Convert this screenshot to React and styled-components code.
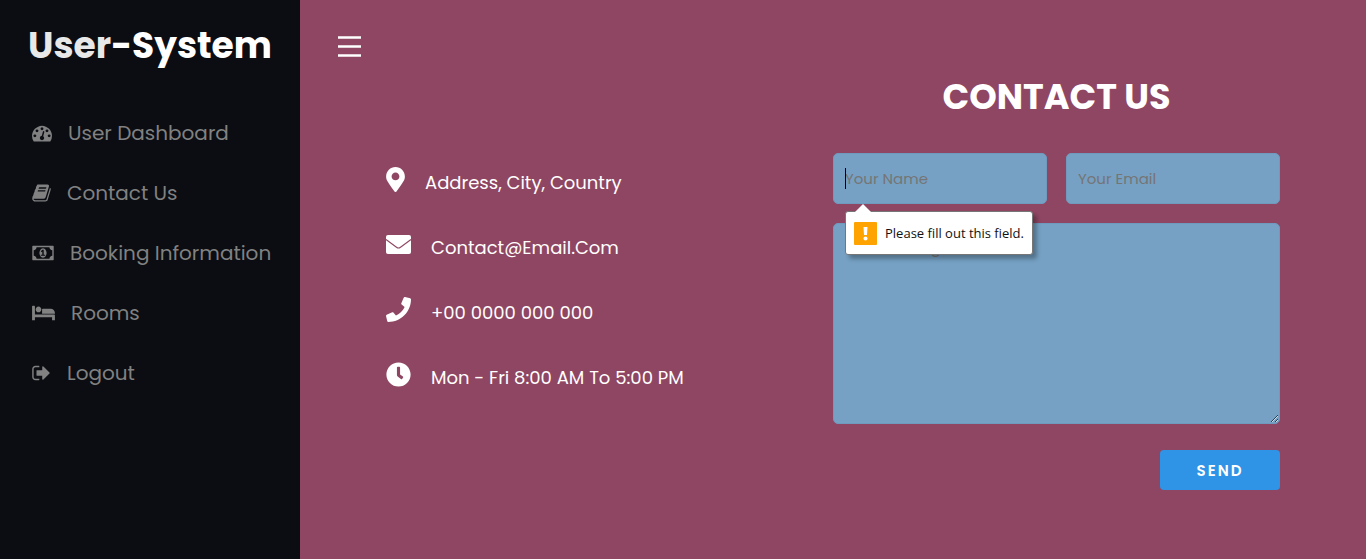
import React from "react";
import styled, { createGlobalStyle } from "styled-components";
import { FaMapMarkerAlt, FaPhone, FaClock } from "react-icons/fa";

const GlobalStyle = createGlobalStyle`
  *, *::before, *::after { box-sizing: border-box; }
  body {
    margin: 0;
    font-family: Poppins, Inter, "Liberation Sans", sans-serif;
    background: #8f4662;
  }
  h1, h2, p, ul { margin: 0; padding: 0; }
  button, input, textarea { font-family: inherit; }
`;

const Page = styled.div`
  display: flex;
  min-height: 100vh;
`;

const Sidebar = styled.aside`
  flex: 0 0 300px;
  padding-top: 17px;
  background: #0b0d12;
`;

const Brand = styled.h1`
  color: #fff;
  font-size: 36px;
  line-height: 58px;
  font-weight: 700;
  text-align: center;
  white-space: nowrap;
`;

const BrandSoft = styled.span`
  color: #e8e8e8;
`;

const NavList = styled.ul`
  display: flex;
  flex-direction: column;
  gap: 20px;
  margin-top: 38px;
  list-style: none;
`;

const NavLink = styled.a`
  display: flex;
  align-items: center;
  gap: 16px;
  height: 40px;
  padding-left: 32px;
  color: #818181;
  font-size: 20px;
  line-height: 40px;
  white-space: nowrap;
  text-decoration: none;
`;

const Glyph = styled.svg`
  flex: none;
  height: 20px;
  fill: currentColor;
`;

const Main = styled.main`
  flex: 1;
  min-width: 0;
  padding: 24px 86px;
`;

const MenuButton = styled.button`
  display: block;
  width: 47px;
  height: 46px;
  margin-left: -60px;
  padding: 4px 0 0;
  border: 0;
  background: none;
  color: #fff;
  cursor: pointer;
`;

const Contact = styled.section`
  display: grid;
  grid-template-columns: 1fr 1fr;
`;

const InfoList = styled.ul`
  display: flex;
  flex-direction: column;
  gap: 25px;
  padding-top: 92px;
  list-style: none;
`;

const InfoItem = styled.li`
  display: flex;
  gap: 20px;
  height: 40px;
  padding-top: 5px;
  color: #fff;
  font-size: 18px;
  line-height: 31px;
  white-space: nowrap;

  svg {
    flex: none;
    width: ${(p) => p.$iconWidth}px;
    height: 25px;
  }
`;

const Form = styled.form`
  display: flex;
  flex-direction: column;
`;

const Title = styled.h2`
  color: #fff;
  font-size: 35px;
  line-height: 54px;
  font-weight: 700;
  text-align: center;
  text-transform: uppercase;
`;

const Fields = styled.div`
  display: grid;
  grid-template-columns: 1fr 1fr;
  gap: 19px;
  margin-top: 29px;
`;

const Field = styled.div`
  position: relative;
  display: flex;
  grid-column: ${(p) => (p.$wide ? "1 / -1" : "auto")};
`;

const fieldLook = `
  width: 100%;
  padding: 11px;
  border: 1px solid #6f9abd;
  border-radius: 5px;
  background: #76a1c4;
  color: #222;
  font-size: 15px;
  line-height: 25px;
  outline: none;
  &::placeholder { color: #757575; opacity: 1; }
`;

const TextInput = styled.input`
  ${fieldLook}
  height: 51px;
`;

const TextArea = styled.textarea`
  ${fieldLook}
  display: block;
  height: 201px;
  resize: vertical;
`;

const Caret = styled.span`
  position: absolute;
  left: 12px;
  top: 15px;
  width: 1px;
  height: 21px;
  background: #000;
`;

const Hint = styled.div`
  position: absolute;
  z-index: 1;
  left: 12px;
  top: 58px;
  display: flex;
  align-items: center;
  gap: 8px;
  height: 44px;
  padding: 0 8px;
  border: 1px solid #767676;
  border-radius: 3px;
  background: #fff;
  box-shadow: 4px 4px 4px rgba(0, 0, 0, 0.3);
  color: #111;
  font-family: "Open Sans", "Noto Sans", sans-serif;
  font-size: 13px;
  white-space: nowrap;

  &::before {
    content: "";
    position: absolute;
    left: 9px;
    top: -8px;
    border: 8px solid transparent;
    border-top: 0;
    border-bottom-color: #fff;
  }
`;

const SendButton = styled.button`
  align-self: flex-end;
  width: 120px;
  height: 40px;
  margin-top: 26px;
  border: 0;
  border-radius: 4px;
  background: #2f94e6;
  color: #fff;
  font-size: 15px;
  font-weight: 600;
  letter-spacing: 2px;
  text-transform: uppercase;
  cursor: pointer;
`;

const nav = [
  {
    label: "User Dashboard",
    box: "0 0 1792 1792",
    width: 20,
    d: "M384 1152q0-53-37.5-90.500t-90.500-37.500-90.500 37.500-37.500 90.500 37.500 90.500 90.500 37.500 90.500-37.500 37.500-90.500zm192-448q0-53-37.500-90.500t-90.500-37.500-90.500 37.500-37.500 90.500 37.500 90.500 90.500 37.500 90.500-37.500 37.500-90.500zm428 481l101-382q6-26-7.500-48.500t-38.500-29.500-48 6.500-30 39.500l-101 382q-60 5-107 43.500t-63 98.500q-20 77 20 146t117 89 146-20 89-117q16-60-6-117t-72-91zm660-33q0-53-37.500-90.500t-90.500-37.500-90.500 37.500-37.500 90.500 37.500 90.500 90.500 37.500 90.500-37.500 37.500-90.500zm-640-640q0-53-37.500-90.500t-90.500-37.500-90.500 37.500-37.500 90.500 37.500 90.500 90.500 37.500 90.500-37.500 37.500-90.500zm448 192q0-53-37.500-90.500t-90.500-37.500-90.500 37.500-37.500 90.500 37.500 90.500 90.500 37.500 90.500-37.500 37.500-90.500zm320 448q0 261-141 483-19 29-54 29h-1402q-35 0-54-29-141-221-141-483 0-182 71-348t191-286 286-191 348-71 348 71 286 191 191 286 71 348z",
  },
  {
    label: "Contact Us",
    box: "0 0 1664 1792",
    width: 19,
    d: "M1639 478q40 57 18 129l-275 906q-19 64-76.500 107.500t-122.500 43.500h-923q-77 0-148.500-53.500t-99.500-131.500q-24-67-2-127 0-4 3-27t4-37q1-8-3-21.500t-3-19.500q2-11 8-21t16.500-23.500 16.500-23.500q23-38 45-91.500t30-91.500q3-10 .5-30t-.5-28q3-11 17-28t17-23q21-36 42-92t25-90q1-9-2.500-32t.5-28q4-13 22-30.500t22-22.500q19-26 42.500-84.500t27.500-96.500q1-8-3-25.500t-2-26.500q2-8 9-18t18-23 17-21q8-12 16.500-30.500t15-35 16-36 19.500-32 26.500-23.500 36-11.500 47.500 5.500l-1 3q38-9 51-9h761q74 0 114 56t18 130l-274 906q-36 119-71.500 153.500t-128.500 34.500h-869q-27 0-38 15-11 16-1 43 24 70 144 70h923q29 0 56-15.500t35-41.500l300-987q7-22 5-57 38 15 59 43zm-1064 2q-4 13 2 22.500t20 9.500h608q13 0 25.500-9.500t16.500-22.500l21-64q4-13-2-22.500t-20-9.500h-608q-13 0-25.500 9.500t-16.500 22.500zm-83 256q-4 13 2 22.500t20 9.500h608q13 0 25.500-9.500t16.500-22.500l21-64q4-13-2-22.500t-20-9.500h-608q-13 0-25.500 9.500t-16.500 22.500z",
  },
  {
    label: "Booking Information",
    box: "0 0 1920 1792",
    width: 22,
    d: "M768 1152h384v-96h-128v-448h-114l-148 137 77 80q42-37 55-57h2v288h-128v96zm512-256q0 70-21 142t-59.500 134-101.500 101-138 39-138-39-101.500-101-59.500-134-21-142 21-142 59.500-134 101.500-101 138-39 138 39 101.500 101 59.500 134 21 142zm512 256v-512q-106 0-181-75t-75-181h-1152q0 106-75 181t-181 75v512q106 0 181 75t75 181h1152q0-106 75-181t181-75zm128-832v1152q0 26-19 45t-45 19h-1792q-26 0-45-19t-19-45v-1152q0-26 19-45t45-19h1792q26 0 45 19t19 45z",
  },
  {
    label: "Rooms",
    box: "0 0 2048 1792",
    width: 23,
    d: "M256 1024h1728q26 0 45 19t19 45v448h-256v-256h-1536v256h-256v-1216q0-26 19-45t45-19h128q26 0 45 19t19 45v704zm576-448q0-106-75-181t-181-75-181 75-75 181 75 181 181 75 181-75 75-181zm1216 384v-64q0-159-112.500-271.500t-271.500-112.500h-704q-26 0-45 19t-19 45v384h1152z",
  },
  {
    label: "Logout",
    box: "64 0 1664 1792",
    width: 19,
    d: "M704 1440q0 4 1 20t.5 26.500-3 23.500-10 19.500-20.500 6.500h-320q-119 0-203.500-84.500t-84.500-203.500v-704q0-119 84.500-203.500t203.500-84.500h320q13 0 22.500 9.500t9.500 22.500q0 4 1 20t.5 26.500-3 23.500-10 19.500-20.500 6.500h-320q-66 0-113 47t-47 113v704q0 66 47 113t113 47h312l11.500 1 11.500 3 8 5.500 7 9 2 13.500zm928-544q0 26-19 45l-544 544q-19 19-45 19t-45-19-19-45v-288h-448q-26 0-45-19t-19-45v-384q0-26 19-45t45-19h448v-288q0-26 19-45t45-19 45 19l544 544q19 19 19 45z",
  },
];

const Envelope = (props) => (
  <svg viewBox="0 0 25 25" {...props}>
    <rect y="3" width="25" height="19" rx="2" fill="currentColor" />
    <path d="M0 7.500L10.500 15.300Q12.500 16.800 14.500 15.300L25 7.500" fill="none" stroke="#8f4662" strokeWidth="1.100" />
  </svg>
);

const info = [
  { Icon: FaMapMarkerAlt, width: 19, text: "Address, City, Country" },
  { Icon: Envelope, width: 25, text: "Contact@Email.Com" },
  { Icon: FaPhone, width: 25, text: "+00 0000 000 000" },
  { Icon: FaClock, width: 25, text: "Mon - Fri 8:00 AM To 5:00 PM" },
];

export default function App() {
  return (
    <>
      <GlobalStyle />
      <Page>
        <Sidebar>
          <Brand>
            <BrandSoft>User</BrandSoft>-System
          </Brand>
          <nav aria-label="Main">
            <NavList>
              {nav.map((item) => (
                <li key={item.label}>
                  <NavLink href="#">
                    <Glyph viewBox={item.box} width={item.width} aria-hidden="true">
                      <path d={item.d} />
                    </Glyph>
                    {item.label}
                  </NavLink>
                </li>
              ))}
            </NavList>
          </nav>
        </Sidebar>
        <Main>
          <MenuButton type="button" aria-label="Toggle menu">
            <svg width="23" height="21" viewBox="0 0 23 21" fill="currentColor" aria-hidden="true">
              <path d="M0 .3h23v2.400H0zM0 9.300h23v2.400H0zM0 18.300h23v2.400H0z" />
            </svg>
          </MenuButton>
          <Contact>
            <InfoList>
              {info.map(({ Icon, width, text }) => (
                <InfoItem key={text} $iconWidth={width}>
                  <Icon aria-hidden="true" />
                  {text}
                </InfoItem>
              ))}
            </InfoList>
            <Form noValidate onSubmit={(e) => e.preventDefault()}>
              <Title>Contact Us</Title>
              <Fields>
                <Field>
                  <TextInput type="text" aria-label="Your Name" placeholder="Your Name" aria-describedby="name-hint" />
                  <Caret />
                  <Hint id="name-hint" role="alert">
                    <svg width="23" height="23" viewBox="0 0 23 23" aria-hidden="true">
                      <rect width="23" height="23" rx="1" fill="#ffa300" />
                      <path d="M9.500 5h4l-.5 8h-3z" fill="#fff" />
                      <circle cx="11.500" cy="16.500" r="2" fill="#fff" />
                    </svg>
                    Please fill out this field.
                  </Hint>
                </Field>
                <Field>
                  <TextInput type="email" aria-label="Your Email" placeholder="Your Email" />
                </Field>
                <Field $wide>
                  <TextArea aria-label="Your Message" placeholder="Your Message" />
                </Field>
              </Fields>
              <SendButton type="submit">Send</SendButton>
            </Form>
          </Contact>
        </Main>
      </Page>
    </>
  );
}
